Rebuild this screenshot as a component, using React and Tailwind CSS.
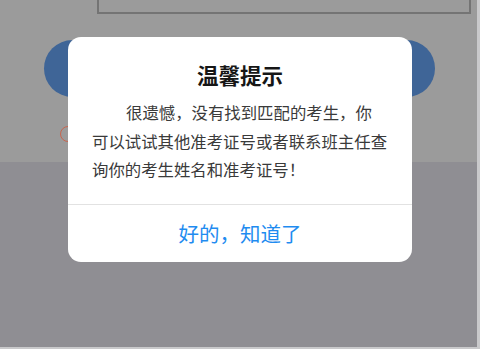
import React from "react";

export default function App() {
  return (
    <div
      className="relative w-[480px] h-[349px] overflow-hidden bg-[#c9c9cb]"
      style={{ fontFamily: '"Noto Sans CJK SC", "Noto Sans", sans-serif' }}
    >
      <div className="w-[477px] h-[347px] flex flex-col">
        <div className="h-[162px] bg-[#9b9b9b] flex flex-col">
          <div className="ml-[97px] w-[370px] h-[12px] -mt-[20px] box-content pt-[20px] border-b-2 border-l-2 border-r-2 border-[#747474] shrink-0" />
          <div className="ml-[44px] mt-[26px] w-[391px] h-[57px] rounded-full bg-[#3f6597] shrink-0" />
          <div className="ml-[60px] mt-[29px] w-[16px] h-[16px] rounded-full border-[1.5px] border-[#c7654f] shrink-0" />
        </div>
        <div className="flex-1 bg-[#8f8e93]" />
      </div>

      <div className="absolute left-[68px] top-[37px] w-[344px] h-[225px] bg-white rounded-[13px] flex flex-col">
        <div className="pt-[23px] text-center text-[21.5px] leading-[30px] font-bold text-[#161616]">
          温馨提示
        </div>
        <div className="mt-[8px] px-[24px] text-[16.4px] leading-[28.5px] text-[#3a3a3a]">
          <div className="whitespace-nowrap pl-[34px]">很遗憾，没有找到匹配的考生，你</div>
          <div className="whitespace-nowrap">可以试试其他准考证号或者联系班主任查</div>
          <div className="whitespace-nowrap">询你的考生姓名和准考证号！</div>
        </div>
        <div className="mt-auto border-t border-[#e2e2e2] h-[58px] flex items-center justify-center text-[20.5px] text-[#1f8cf0]">
          好的，知道了
        </div>
      </div>
    </div>
  );
}
